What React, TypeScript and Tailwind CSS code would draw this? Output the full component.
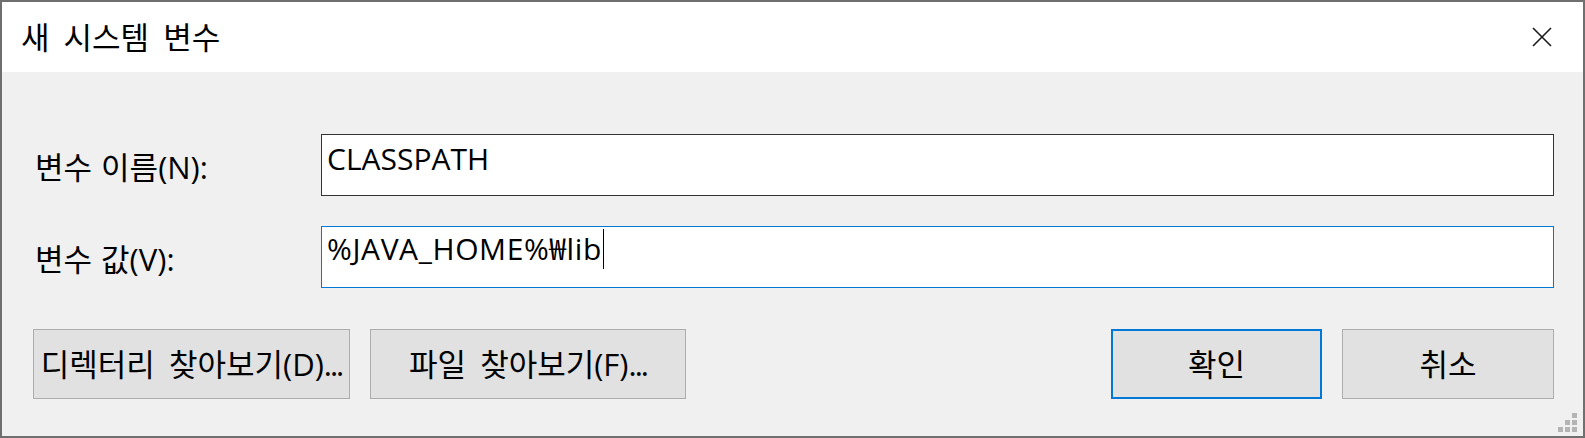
import React from "react";

const font = {
  fontFamily: '"Open Sans", "Noto Sans CJK KR", sans-serif',
};

function Dots() {
  return <span className="tracking-[-2px]">...</span>;
}

function Btn({ children, primary, w }: { children: React.ReactNode; primary?: boolean; w: string }) {
  return (
    <div
      className={`${w} h-[70px] flex items-center justify-center whitespace-nowrap bg-[#e1e1e1] text-[31px] [word-spacing:6px] text-black ${
        primary ? "border-2 border-[#0078d7]" : "border border-[#adadad]"
      }`}
    >
      <div className="leading-[40px]">{children}</div>
    </div>
  );
}

export default function App() {
  return (
    <div
      className="relative w-[1585px] h-[438px] border-2 border-[#6f6f6f] flex flex-col bg-[#f0f0f0] overflow-hidden"
      style={font}
    >
      <div className="h-[70px] bg-white flex items-center justify-between pl-[19px] pr-[31px] shrink-0">
        <div className="text-[31px] [word-spacing:6px] text-black leading-none pt-[1px]">새 시스템 변수</div>
        <svg width="20" height="20" viewBox="0 0 20 20" className="block">
          <path d="M1 1 L19 19 M19 1 L1 19" stroke="#1a1a1a" strokeWidth="1.6" fill="none" />
        </svg>
      </div>
      <div className="flex-1 flex flex-col pl-[31px] pr-[29px] pt-[62px]">
        <div className="grid grid-cols-[288px_1fr] gap-y-[30px]">
          <div className="h-[62px] flex items-center pl-[2px] text-[31px] [word-spacing:1px] text-black pt-[4px]">
            <div className="leading-[40px] whitespace-nowrap">변수 이름(N):</div>
          </div>
          <div className="h-[62px] bg-white border border-[#333333] pl-[5px] pt-[4px] text-[30px] leading-[40px] text-black">
            CLASSPATH
          </div>
          <div className="h-[62px] flex items-center pl-[2px] text-[31px] [word-spacing:1px] text-black pt-[4px]">
            <div className="leading-[40px] whitespace-nowrap">변수 값(V):</div>
          </div>
          <div className="h-[62px] bg-white border border-[#0078d7] pl-[5px] pt-[2px] text-[30px] leading-[40px] text-black flex items-start">
            <span className="tracking-[0.6px]">%JAVA_HOME%₩lib</span>
            <span className="inline-block w-px h-[40px] bg-black ml-[1px]" />
          </div>
        </div>
        <div className="mt-[41px] flex items-center">
          <div className="flex gap-[20px]">
            <Btn w="w-[317px]">
              디렉터리 찾아보기(D)<Dots />
            </Btn>
            <Btn w="w-[316px]">
              파일 찾아보기(F)<Dots />
            </Btn>
          </div>
          <div className="flex-1" />
          <div className="flex gap-[20px]">
            <Btn w="w-[211px]" primary>
              확인
            </Btn>
            <Btn w="w-[212px]">취소</Btn>
          </div>
        </div>
      </div>
      <svg width="19" height="19" viewBox="0 0 19 19" className="absolute right-[6px] bottom-[4px]">
        <g fill="#b4b4b4">
          <rect x="14" y="0" width="5" height="5" />
          <rect x="7" y="7" width="5" height="5" />
          <rect x="14" y="7" width="5" height="5" />
          <rect x="0" y="14" width="5" height="5" />
          <rect x="7" y="14" width="5" height="5" />
          <rect x="14" y="14" width="5" height="5" />
        </g>
      </svg>
    </div>
  );
}
